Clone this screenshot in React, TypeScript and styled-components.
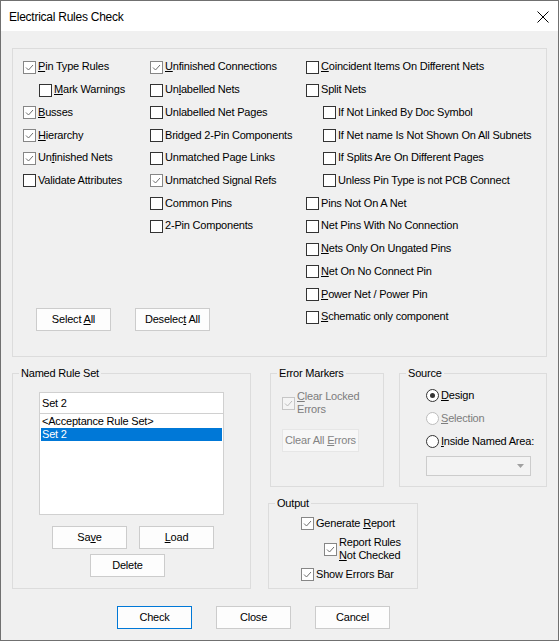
import React from "react";
import styled, { createGlobalStyle, css } from "styled-components";

const Global = createGlobalStyle`
  html, body { margin: 0; padding: 0; background: #f0f0f0; }
  body { font-family: "Liberation Sans", Arial, sans-serif; }
  * { box-sizing: border-box; }
`;

const FONT = `font-family: "Liberation Sans", Arial, sans-serif; font-size: 11px; letter-spacing: -0.2px; color: #000;`;

const Window = styled.div`
  width: 559px;
  height: 641px;
  border: 1px solid #707070;
  background: #f0f0f0;
  display: flex;
  flex-direction: column;
  overflow: hidden;
`;

const TitleBar = styled.div`
  height: 30px;
  background: #fff;
  display: flex;
  align-items: center;
  justify-content: space-between;
  padding: 0 8px 0 8px;
  flex: none;
`;

const Title = styled.span`
  font-family: "Liberation Sans", Arial, sans-serif;
  font-size: 12px;
  letter-spacing: -0.25px;
  color: #000;
  padding-top: 1px;
`;

const CloseIcon = styled.svg`
  width: 12px;
  height: 12px;
  margin-right: 1px;
  margin-top: 1px;
`;

const Client = styled.div`
  flex: 1;
  display: flex;
  flex-direction: column;
  padding: 17px 11px 0 11px;
  ${FONT}
`;

const MainGroup = styled.div`
  height: 309px;
  border: 1px solid #dcdcdc;
  padding: 7px 0 0 10px;
  display: grid;
  grid-template-columns: 283px 1fr;
`;

const LeftArea = styled.div`
  display: flex;
  flex-direction: column;
`;

const Lists = styled.div`
  display: grid;
  grid-template-columns: 127px 156px;
`;

const Column = styled.div`
  display: flex;
  flex-direction: column;
`;

const Row = styled.div<{ $indent?: number; $h?: number }>`
  display: flex;
  align-items: center;
  height: ${(p) => p.$h ?? 22.73}px;
  padding-left: ${(p) => p.$indent ?? 0}px;
  white-space: nowrap;
`;

const Label = styled.span<{ $disabled?: boolean }>`
  margin-left: 2px;
  line-height: 13px;
  color: ${(p) => (p.$disabled ? "#7d7d7d" : "#000")};
  padding-bottom: 1px;
  u {
    text-decoration: underline;
    text-underline-offset: 1px;
  }
`;

const BoxSvg = styled.svg`
  width: 13px;
  height: 13px;
  flex: none;
  display: block;
`;

const ButtonRow = styled.div<{ $pad?: number; $gap?: number; $top?: number }>`
  display: flex;
  gap: ${(p) => p.$gap ?? 24}px;
  padding-left: ${(p) => p.$pad ?? 0}px;
  margin-top: ${(p) => p.$top ?? 0}px;
`;

const Button = styled.button<{ $primary?: boolean; $w?: number }>`
  ${FONT}
  width: ${(p) => p.$w ?? 75}px;
  height: 23px;
  padding: 0 0 1px 0;
  background: #fdfdfd;
  border: 1px solid ${(p) => (p.$primary ? "#0078d7" : "#cccccc")};
  border-radius: 0;
  cursor: default;
  u { text-underline-offset: 1px; }
  ${(p) =>
    p.disabled &&
    css`
      background: #f7f7f7;
      border-color: #e6e6e6;
      color: #838383;
    `}
`;

const BottomRow = styled.div`
  margin-top: 9px;
  display: grid;
  grid-template-columns: 239px 1fr;
  column-gap: 17px;
`;

const GroupBox = styled.fieldset<{ $h: number }>`
  margin: 0;
  min-width: 0;
  height: ${(p) => p.$h}px;
  border: 1px solid #dcdcdc;
  padding: 0;
  display: block;
`;

const GroupBody = styled.div<{ $pt?: number; $pl?: number }>`
  display: flex;
  flex-direction: column;
  align-items: flex-start;
  padding: ${(p) => p.$pt ?? 0}px 0 0 ${(p) => p.$pl ?? 0}px;
`;

const Legend = styled.legend`
  ${FONT}
  line-height: 14px;
  padding: 0 2px;
  margin: 0 auto 0 6px;
  text-align: left;
`;

const RightArea = styled.div`
  display: flex;
  flex-direction: column;
  gap: 9px;
`;

const TopRight = styled.div`
  display: grid;
  grid-template-columns: 114px 148px;
  column-gap: 15px;
  padding-left: 2px;
`;

const OutputWrap = styled.div`
  width: 150px;
`;

const Combo = styled.div`
  width: 185px;
  display: flex;
  flex-direction: column;
`;

const EditBox = styled.div`
  height: 22px;
  border: 1px solid #d0d0d0;
  background: #fff;
  padding: 0 2px;
  display: flex;
  align-items: center;
  line-height: 13px;
`;

const ListBox = styled.div`
  height: 101px;
  border: 1px solid #d0d0d0;
  border-top: none;
  background: #fff;
  padding: 1px;
  display: flex;
  flex-direction: column;
`;

const ListItem = styled.div<{ $selected?: boolean }>`
  height: 13px;
  line-height: 13px;
  padding-left: 1px;
  background: ${(p) => (p.$selected ? "#0078d7" : "transparent")};
  color: ${(p) => (p.$selected ? "#fff" : "#000")};
  white-space: nowrap;
`;

const DropDown = styled.div`
  width: 105px;
  height: 20px;
  margin-top: 3px;
  border: 1px solid #cccccc;
  background: #f3f3f3;
  display: flex;
  align-items: center;
  justify-content: flex-end;
  padding-right: 6px;
`;

const Arrow = styled.svg`
  width: 7px;
  height: 4px;
`;

const FooterRow = styled.div`
  margin-top: 17px;
  display: flex;
  gap: 24px;
  padding-left: 105px;
`;

type CB = { checked?: boolean; disabled?: boolean };

const CheckBox: React.FC<CB> = ({ checked, disabled }) => {
  const border = disabled ? "#c6c6c6" : checked ? "#868686" : "#333333";
  const bg = disabled ? "#f4f4f4" : "#ffffff";
  const mark = disabled ? "#bcbcbc" : "#6f6f6f";
  return (
    <BoxSvg viewBox="0 0 13 13">
      <rect x="0.5" y="0.5" width="12" height="12" fill={bg} stroke={border} />
      {checked && (
        <polyline points="3,6.5 5.5,9 10,4" fill="none" stroke={mark} strokeWidth="1" />
      )}
    </BoxSvg>
  );
};

const Radio: React.FC<CB> = ({ checked, disabled }) => (
  <BoxSvg viewBox="0 0 13 13">
    <circle cx="6.5" cy="6.5" r="6" fill="#fff" stroke={disabled ? "#bcbcbc" : "#333"} />
    {checked && <circle cx="6.5" cy="6.5" r="2.5" fill="#333" />}
  </BoxSvg>
);

type Item = {
  label: React.ReactNode;
  checked?: boolean;
  indent?: number;
};

const col1: Item[] = [
  { label: <><u>P</u>in Type Rules</>, checked: true },
  { label: <><u>M</u>ark Warnings</>, indent: 16 },
  { label: <><u>B</u>usses</>, checked: true },
  { label: <><u>H</u>ierarchy</>, checked: true },
  { label: <>Un<u>f</u>inished Nets</>, checked: true },
  { label: <>Validate Attributes</> },
];

const col2: Item[] = [
  { label: <><u>U</u>nfinished Connections</>, checked: true },
  { label: <>Un<u>l</u>abelled Nets</> },
  { label: <>Unlabelled Net Pages</> },
  { label: <>Bridged 2-Pin Components</> },
  { label: <>Unmatched Page Links</> },
  { label: <>Unmatched Signal Refs</>, checked: true },
  { label: <>Common Pins</> },
  { label: <>2-Pin Components</> },
];

const col3: Item[] = [
  { label: <><u>C</u>oincident Items On Different Nets</> },
  { label: <>Split Nets</> },
  { label: <>If Not Linked By Doc Symbol</>, indent: 17 },
  { label: <>If Net name Is Not Shown On All Subnets</>, indent: 17 },
  { label: <>If Splits Are On Different Pages</>, indent: 17 },
  { label: <>Unless Pin Type is not PCB Connect</>, indent: 17 },
  { label: <>Pins Not On A Net</> },
  { label: <>Net Pins With No Connection</> },
  { label: <><u>N</u>ets Only On Ungated Pins</> },
  { label: <><u>N</u>et On No Connect Pin</> },
  { label: <><u>P</u>ower Net / Power Pin</> },
  { label: <><u>S</u>chematic only component</> },
];

const renderCol = (items: Item[]) => (
  <Column>
    {items.map((it, i) => (
      <Row key={i} $indent={it.indent}>
        <CheckBox checked={it.checked} />
        <Label>{it.label}</Label>
      </Row>
    ))}
  </Column>
);

export default function App() {
  return (
    <>
      <Global />
      <Window>
        <TitleBar>
          <Title>Electrical Rules Check</Title>
          <CloseIcon viewBox="0 0 12 12">
            <path d="M0.5 0.5 L11.5 11.5 M11.5 0.5 L0.5 11.5" stroke="#000" strokeWidth="1" />
          </CloseIcon>
        </TitleBar>
        <Client>
          <MainGroup>
            <LeftArea>
              <Lists>
                {renderCol(col1)}
                {renderCol(col2)}
              </Lists>
              <ButtonRow $pad={13} $top={70}>
                <Button>Select <u>A</u>ll</Button>
                <Button>Deselec<u>t</u> All</Button>
              </ButtonRow>
            </LeftArea>
            {renderCol(col3)}
          </MainGroup>

          <BottomRow>
            <GroupBox $h={223}>
              <Legend>Named Rule Set</Legend>
              <GroupBody $pt={12} $pl={26}>
                <Combo>
                  <EditBox>Set 2</EditBox>
                  <ListBox>
                    <ListItem>&lt;Acceptance Rule Set&gt;</ListItem>
                    <ListItem $selected>Set 2</ListItem>
                  </ListBox>
                </Combo>
                <ButtonRow $pad={13} $gap={12} $top={11}>
                  <Button>Sa<u>v</u>e</Button>
                  <Button><u>L</u>oad</Button>
                </ButtonRow>
                <ButtonRow $pad={51} $top={5}>
                  <Button>Delete</Button>
                </ButtonRow>
              </GroupBody>
            </GroupBox>

            <RightArea>
              <TopRight>
                <GroupBox $h={121}>
                  <Legend>Error Markers</Legend>
                  <GroupBody $pt={10} $pl={11}>
                    <Row $h={27}>
                      <CheckBox checked disabled />
                      <Label $disabled>
                        <u>C</u>lear Locked
                        <br />
                        Errors
                      </Label>
                    </Row>
                    <ButtonRow $top={12}>
                      <Button disabled $w={77}>Clear All <u>E</u>rrors</Button>
                    </ButtonRow>
                  </GroupBody>
                </GroupBox>
                <GroupBox $h={121}>
                  <Legend>Source</Legend>
                  <GroupBody $pt={4} $pl={26}>
                    <Row $h={23}>
                      <Radio checked />
                      <Label><u>D</u>esign</Label>
                    </Row>
                    <Row $h={23}>
                      <Radio disabled />
                      <Label $disabled><u>S</u>election</Label>
                    </Row>
                    <Row $h={23}>
                      <Radio />
                      <Label><u>I</u>nside Named Area:</Label>
                    </Row>
                    <DropDown>
                      <Arrow viewBox="0 0 7 4">
                        <path d="M0 0 L7 0 L3.5 4 Z" fill="#a0a0a0" />
                      </Arrow>
                    </DropDown>
                  </GroupBody>
                </GroupBox>
              </TopRight>
              <OutputWrap>
                <GroupBox $h={93}>
                  <Legend>Output</Legend>
                  <GroupBody $pt={2} $pl={32}>
                    <Row $h={23}>
                      <CheckBox checked />
                      <Label>Generate <u>R</u>eport</Label>
                    </Row>
                    <Row $h={28} $indent={23}>
                      <CheckBox checked />
                      <Label>
                        Report Rules
                        <br />
                        <u>N</u>ot Checked
                      </Label>
                    </Row>
                    <Row $h={23}>
                      <CheckBox checked />
                      <Label>Show Errors Bar</Label>
                    </Row>
                  </GroupBody>
                </GroupBox>
              </OutputWrap>
            </RightArea>
          </BottomRow>

          <FooterRow>
            <Button $primary>Check</Button>
            <Button>Close</Button>
            <Button>Cancel</Button>
          </FooterRow>
        </Client>
      </Window>
    </>
  );
}
